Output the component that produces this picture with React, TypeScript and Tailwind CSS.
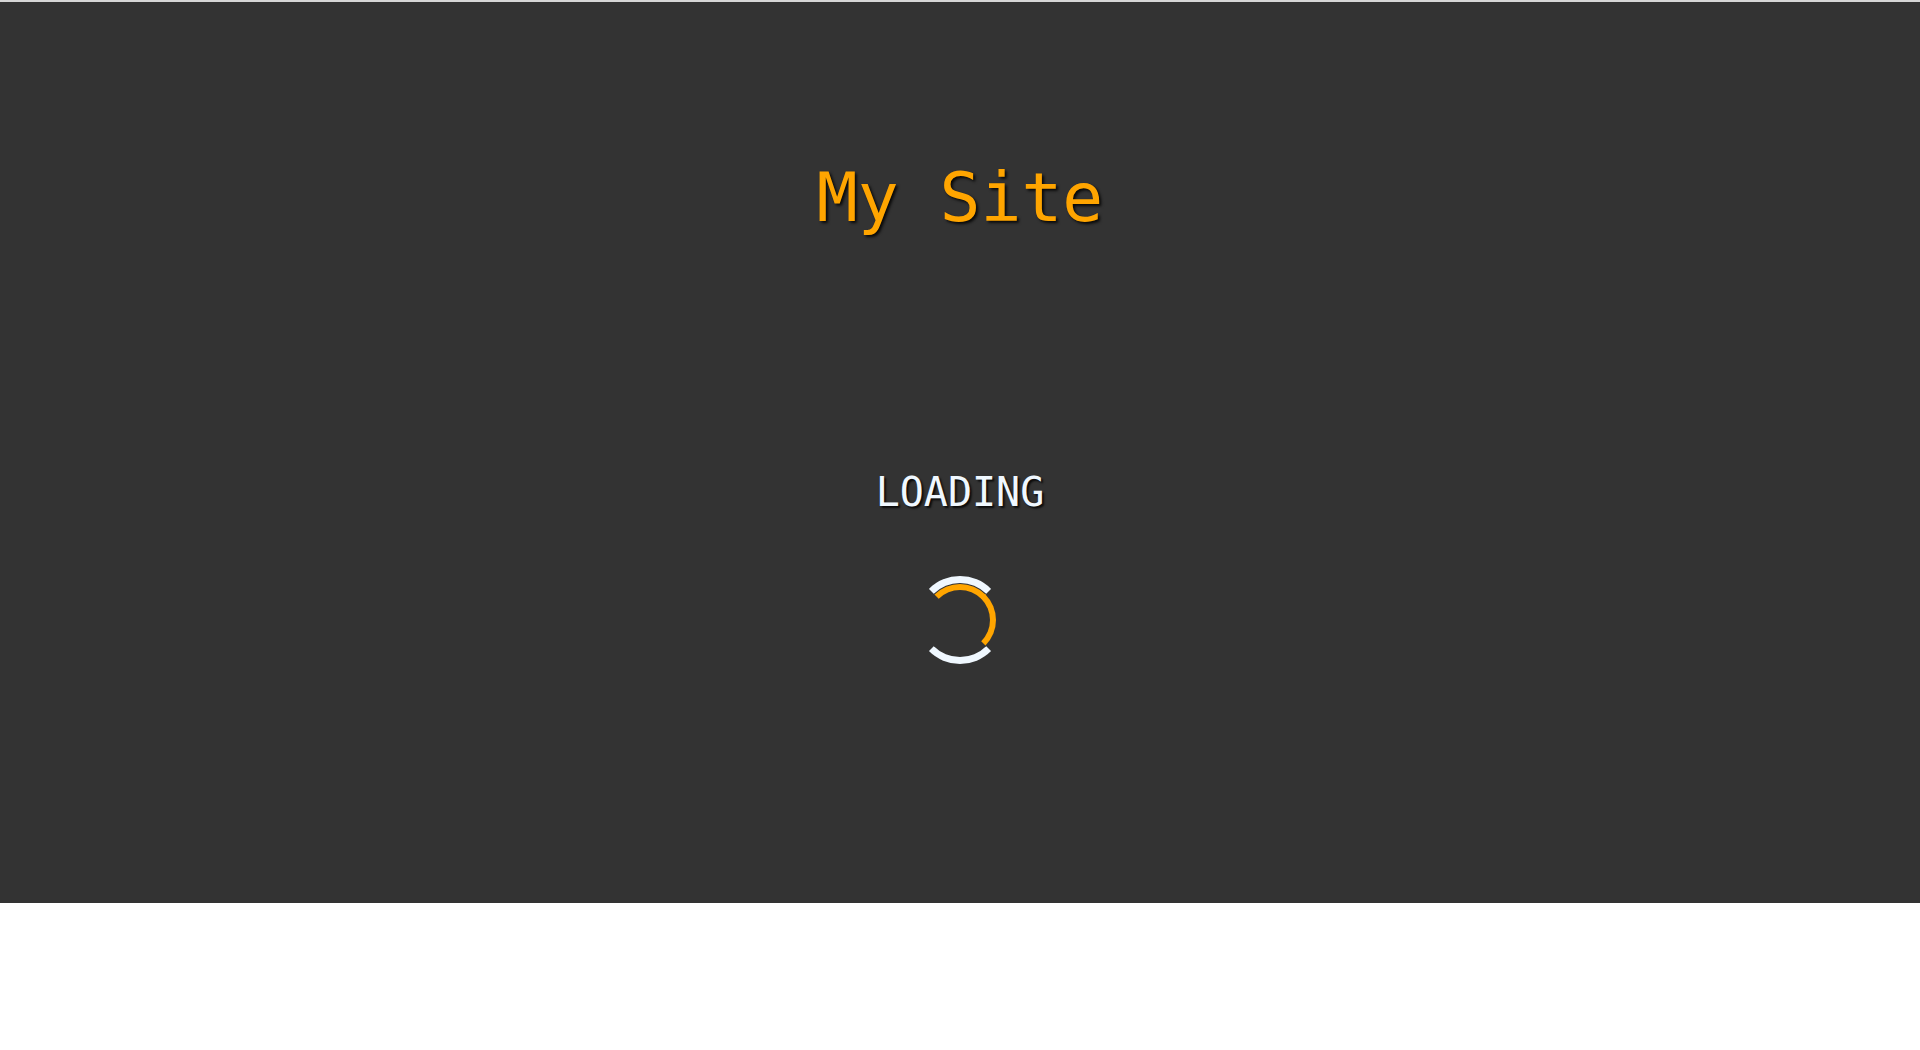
export default function App() {
  return (
    <div className="min-h-screen bg-white">
      <div className="h-[2px] bg-[#d6d6d6]" />
      <section className="flex h-[901px] flex-col items-center bg-[#333333] font-['DejaVu_Sans_Mono',monospace]">
        <h1 className="mt-[162px] text-[68px] leading-none text-[#ffa500] [text-shadow:2px_2px_3px_rgba(0,0,0,0.85)]">
          My Site
        </h1>
        <p className="mt-[240px] text-[40px] leading-none text-[#f0f8ff] [text-shadow:2px_2px_2px_rgba(0,0,0,0.8)]">
          LOADING
        </p>
        <div className="relative mt-[64px] h-[88px] w-[88px] rounded-full border-[7px] border-x-transparent border-y-[#f0f8ff]">
          <div className="absolute inset-[1px] rounded-full border-[6px] border-b-transparent border-l-transparent border-r-[#ffa500] border-t-[#ffa500]" />
        </div>
      </section>
    </div>
  )
}
